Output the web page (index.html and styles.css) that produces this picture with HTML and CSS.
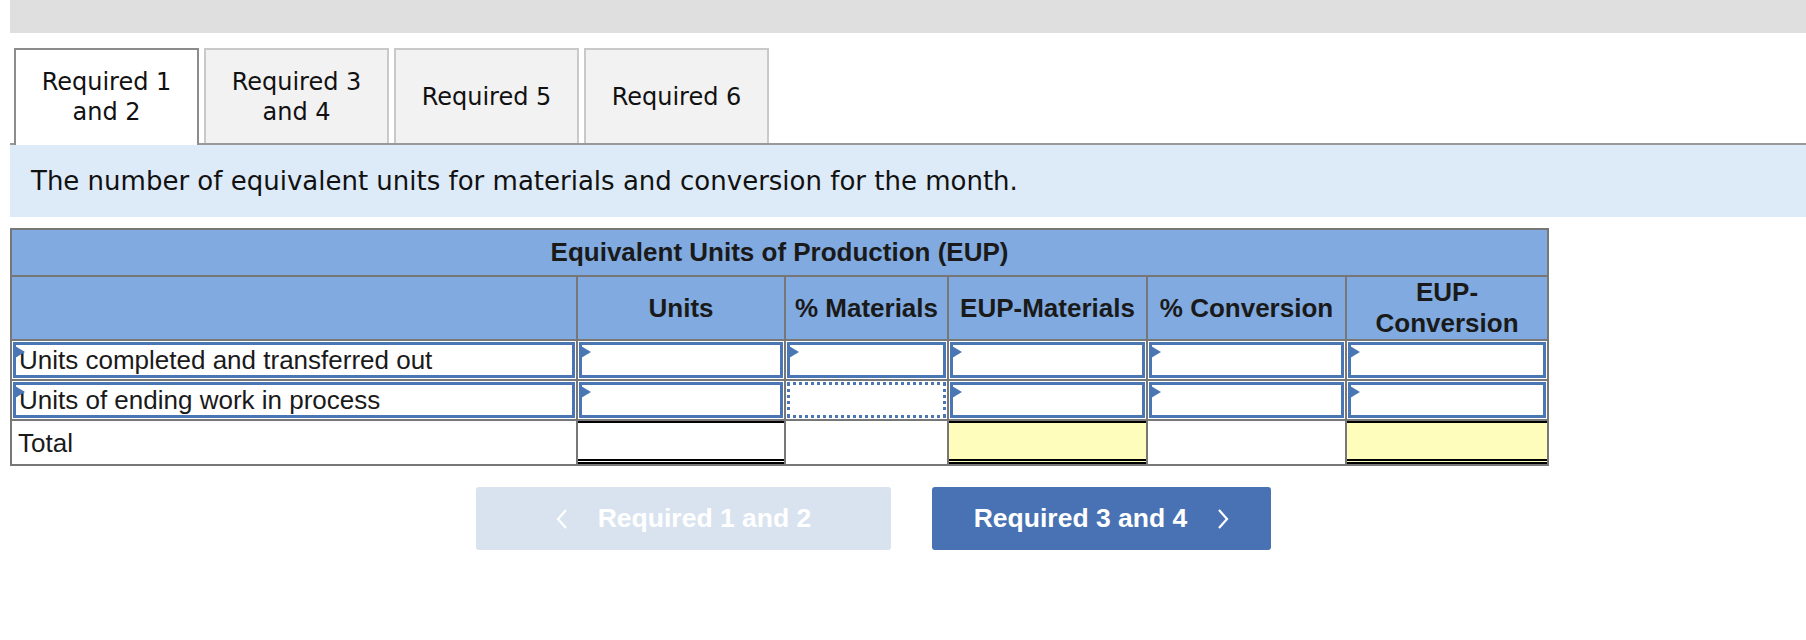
FILE: index.html
```html
<!DOCTYPE html>
<html>
<head>
<meta charset="utf-8">
<link rel="stylesheet" href="styles.css">
</head>
<body>
<div class="topbar"></div>
<div class="tabs">
  <div class="tab active">Required 1<br>and 2</div>
  <div class="tab">Required 3<br>and 4</div>
  <div class="tab">Required 5</div>
  <div class="tab">Required 6</div>
</div>
<div class="desc">The number of equivalent units for materials and conversion for the month.</div>
<table class="eup">
  <colgroup>
    <col class="c-label"><col class="c-units"><col class="c-pm"><col class="c-em"><col class="c-pc"><col class="c-ec">
  </colgroup>
  <tr class="h1">
    <th colspan="6">Equivalent Units of Production (EUP)</th>
  </tr>
  <tr class="h2">
    <th></th>
    <th>Units</th>
    <th>% Materials</th>
    <th>EUP-Materials</th>
    <th>% Conversion</th>
    <th>EUP-<br>Conversion</th>
  </tr>
  <tr class="row">
    <td><div class="inp lab"><span class="flag"></span>Units completed and transferred out</div></td>
    <td><div class="inp"><span class="flag"></span></div></td>
    <td><div class="inp"><span class="flag"></span></div></td>
    <td><div class="inp"><span class="flag"></span></div></td>
    <td><div class="inp"><span class="flag"></span></div></td>
    <td><div class="inp"><span class="flag"></span></div></td>
  </tr>
  <tr class="row">
    <td><div class="inp lab"><span class="flag"></span>Units of ending work in process</div></td>
    <td><div class="inp"><span class="flag"></span></div></td>
    <td><div class="inp focus"></div></td>
    <td><div class="inp"><span class="flag"></span></div></td>
    <td><div class="inp"><span class="flag"></span></div></td>
    <td><div class="inp"><span class="flag"></span></div></td>
  </tr>
  <tr class="total">
    <td class="tlabel">Total</td>
    <td><div class="sum"></div></td>
    <td></td>
    <td class="yellow"><div class="sum"></div></td>
    <td></td>
    <td class="yellow"><div class="sum"></div></td>
  </tr>
</table>
<div class="nav">
  <div class="btn prev">
    <svg class="chev" width="12" height="22" viewBox="0 0 12 22"><polyline points="10,2 2,11 10,20" fill="none" stroke="#fff" stroke-width="2.2"/></svg>
    <span>Required 1 and 2</span>
  </div>
  <div class="btn next">
    <span>Required 3 and 4</span>
    <svg class="chev" width="12" height="22" viewBox="0 0 12 22"><polyline points="2,2 10,11 2,20" fill="none" stroke="#fff" stroke-width="2.2"/></svg>
  </div>
</div>
</body>
</html>
```
FILE: styles.css
```css
html, body {
  margin: 0;
  padding: 0;
  background: #fff;
}
body {
  font-family: "DejaVu Sans", Verdana, sans-serif;
  color: #222;
}
.topbar {
  margin-left: 10px;
  height: 33px;
  background: #dfdfdf;
}
.tabs {
  display: flex;
  gap: 5px;
  margin-top: 15px;
  margin-left: 10px;
  padding-left: 4px;
  border-bottom: 2px solid #999;
}
.tab {
  box-sizing: border-box;
  width: 185px;
  height: 95px;
  margin-bottom: -2px;
  border: 2px solid #c9c9c9;
  border-bottom: none;
  background: #f2f2f2;
  display: flex;
  align-items: center;
  justify-content: center;
  text-align: center;
  font-size: 24px;
  line-height: 30px;
  color: #111;
  padding-top: 1px;
}
.tab.active {
  background: #fff;
  border-color: #8c8c8c;
  height: 97px;
  padding-bottom: 2px;
}
.desc {
  margin-left: 10px;
  height: 72px;
  background: #ddeaf7;
  display: flex;
  align-items: center;
  padding-left: 21px;
  font-size: 26px;
  color: #111;
}
.eup {
  margin-top: 11px;
  margin-left: 10px;
  width: 1537px;
  border-collapse: collapse;
  table-layout: fixed;
  font-family: "Liberation Sans", Arial, sans-serif;
  font-size: 26px;
  color: #1a1a1a;
}
.c-label { width: 566px; }
.c-units { width: 208px; }
.c-pm { width: 163px; }
.c-em { width: 199px; }
.c-pc { width: 199px; }
.c-ec { width: 202px; }
.eup th, .eup td {
  border: 2px solid #777;
  padding: 0;
}
.eup th {
  background: #80aae0;
  font-weight: bold;
  text-align: center;
  line-height: 31px;
}
.h1 th { height: 45px; }
.h2 th { height: 60px; }
.row td { height: 36px; padding: 1px; }
.inp {
  position: relative;
  box-sizing: border-box;
  height: 36px;
  border: 3px solid #4a76b4;
  background: #fff;
}
.inp.lab {
  padding-left: 3px;
  line-height: 30px;
  white-space: nowrap;
}
.inp.focus {
  border: 3px dotted #4a76b4;
}
.flag {
  position: absolute;
  left: -1px;
  top: 1px;
  width: 0;
  height: 0;
  border-top: 6px solid transparent;
  border-bottom: 6px solid transparent;
  border-left: 10px solid #4a76b4;
}
.total td { height: 43px; }
.tlabel {
  padding-left: 6px !important;
  line-height: 38px;
}
.total .sum {
  box-sizing: border-box;
  height: 43px;
  border-top: 2px solid #000;
  border-bottom: 5px double #000;
}
.total td.yellow { background: #fffdbb; }
.nav {
  display: flex;
  gap: 41px;
  margin-top: 21px;
  padding-left: 476px;
}
.btn {
  box-sizing: border-box;
  height: 63px;
  border-radius: 3px;
  display: flex;
  align-items: center;
  justify-content: center;
  gap: 30px;
  font-family: "Liberation Sans", Arial, sans-serif;
  font-weight: bold;
  font-size: 26.5px;
  color: #fff;
}
.btn.prev {
  width: 415px;
  background: #d9e3ef;
}
.btn.next {
  width: 339px;
  background: #4872b3;
}
```
